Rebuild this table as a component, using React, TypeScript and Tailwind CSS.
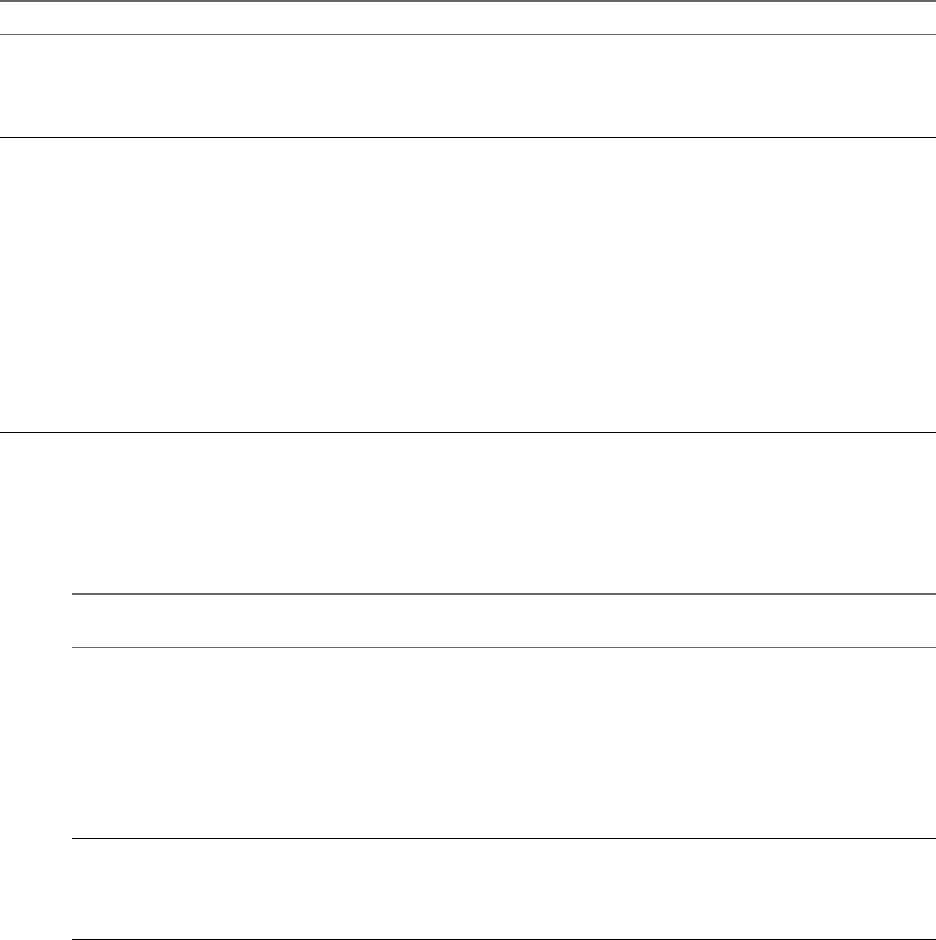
export default function App() {
  return (
    <div className="w-[936px] h-[940px] bg-white overflow-hidden flex flex-col">
      <div className="h-[2px] bg-[#666666]" />
      <div className="h-[32px]" />
      <div className="h-px bg-[#666666]" />
      <div className="h-[102px]" />
      <div className="h-px bg-black" />
      <div className="h-[294px]" />
      <div className="h-px bg-black" />
      <div className="h-[160px]" />
      <div className="ml-[72px] flex flex-col">
        <div className="h-[2px] bg-[#666666]" />
        <div className="h-[52px]" />
        <div className="h-px bg-[#666666]" />
        <div className="h-[190px]" />
        <div className="h-px bg-black" />
        <div className="h-[100px]" />
        <div className="h-px bg-black" />
      </div>
    </div>
  );
}
